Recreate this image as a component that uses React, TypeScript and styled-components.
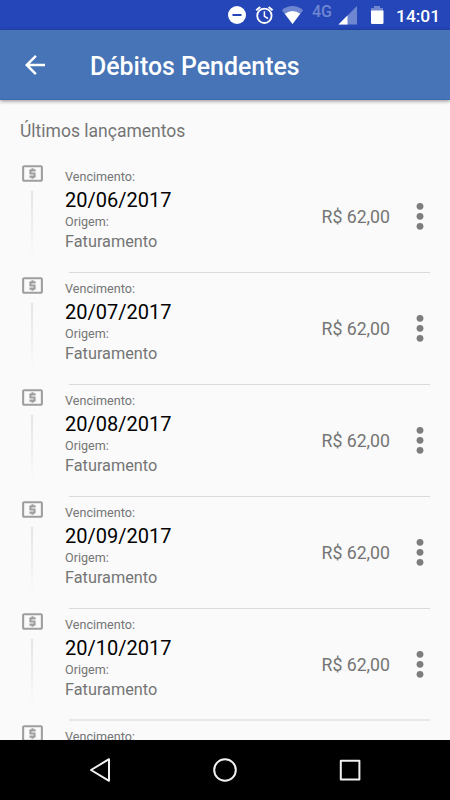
import React from "react";
import styled, { createGlobalStyle } from "styled-components";

const GlobalStyle = createGlobalStyle`
  * { box-sizing: border-box; }
  html, body { margin: 0; padding: 0; }
  body { font-family: Roboto, "Liberation Sans", sans-serif; background: #fafafa; overflow: hidden; }
`;

const Screen = styled.div`
  width: 450px;
  height: 800px;
  display: flex;
  flex-direction: column;
  overflow: hidden;
  background: #fafafa;
`;

const StatusBar = styled.header`
  flex: 0 0 30px;
  height: 30px;
  min-height: 0;
  background: #2446b8;
  color: #fff;
  display: flex;
  justify-content: flex-end;
  padding-right: 10px;
`;

const StatusIcons = styled.svg`
  width: 164px;
  height: 30px;
  margin-right: 12px;
  display: block;
`;

const NetworkLabel = styled.text`
  font: 500 16px Roboto, sans-serif;
  fill: #6f86d1;
`;

const Clock = styled.span`
  width: 44px;
  padding-top: 2px;
  font-size: 17.4px;
  font-weight: 500;
  line-height: 28px;
  white-space: nowrap;
`;

const AppBar = styled.div`
  flex: 0 0 70px;
  z-index: 1;
  display: flex;
  align-items: center;
  padding-left: 20px;
  background: #4674b7;
  border-bottom: 1px solid #3a6cb4;
  box-shadow: 0 1px 4px rgba(0, 0, 0, 0.45);
`;

const BackButton = styled.button`
  width: 30px;
  height: 30px;
  margin-right: 40px;
  padding: 0;
  border: 0;
  background: none;
  svg { display: block; }
`;

const Title = styled.h1`
  margin: 5px 0 0;
  font-size: 24.9px;
  font-weight: 500;
  line-height: 30px;
  color: #fff;
`;

const Content = styled.main`
  flex: 1 1 0;
  min-height: 0;
  overflow: hidden;
`;

const SectionTitle = styled.h2`
  height: 61px;
  margin: 0;
  padding-left: 20px;
  font-size: 17.5px;
  font-weight: 400;
  line-height: 62px;
  color: #757575;
`;

const Row = styled.article`
  height: 112px;
  display: flex;
  padding-right: 20px;
`;

const Timeline = styled.div`
  width: 65px;
  padding-left: 20px;
  svg { display: block; }
`;

const TimelineStem = styled.div`
  width: 2px;
  height: 66px;
  margin: 5px 0 0 11px;
  background: linear-gradient(#e4e4e4, #eeeeee 50%, #fafafa);
`;

const RowBody = styled.div<{ $soft: boolean }>`
  flex: 1;
  display: flex;
  background: linear-gradient(${p => (p.$soft ? "#e8e8e8, #e8e8e8" : "#dadada, #dadada")}) no-repeat
    4px ${p => (p.$soft ? "110px" : "111px")} / calc(100% - 4px) ${p => (p.$soft ? "2px" : "1px")};
`;

const Details = styled.div`
  flex: 1;
  padding-top: 8px;
`;

const Caption = styled.div`
  height: 16px;
  font-size: 12.6px;
  line-height: 16px;
  color: #757575;
`;

const DueDate = styled.div`
  height: 29px;
  font-size: 20px;
  line-height: 30px;
  color: #000;
`;

const Origin = styled.div`
  height: 23px;
  font-size: 16.3px;
  line-height: 23px;
  color: #757575;
`;

const Amount = styled.div`
  width: 70px;
  margin-right: 19px;
  font-size: 17.7px;
  line-height: 112px;
  color: #757575;
  white-space: nowrap;
  text-align: right;
`;

const MenuButton = styled.button`
  width: 21px;
  height: 112px;
  padding: 0;
  border: 0;
  background: none;
  svg { display: block; }
`;

const NavBar = styled.nav`
  flex: 0 0 60px;
  display: flex;
  align-items: center;
  justify-content: center;
  gap: 85px;
  background: #000;
`;

const NavIcon = styled.svg`
  width: 40px;
  height: 40px;
  fill: none;
  stroke: #f1f1f1;
  stroke-width: 2;
  stroke-linejoin: round;
`;

const dates = ["20/06/2017", "20/07/2017", "20/08/2017", "20/09/2017", "20/10/2017", "20/11/2017"];

const MoneyIcon = () => (
  <svg width="25" height="25" viewBox="0 0 24 24" fill="#9e9e9e">
    <path d="M11 17h2v-1h1c.55 0 1-.45 1-1v-3c0-.55-.45-1-1-1h-3v-1h4V8h-2V7h-2v1h-1c-.55 0-1 .45-1 1v3c0 .55.45 1 1 1h3v1H9v2h2v1zm9-13H4c-1.11 0-1.99.89-1.99 2L2 18c0 1.11.89 2 2 2h16c1.11 0 2-.89 2-2V6c0-1.11-.89-2-2-2zm0 14H4V6h16v12z" />
  </svg>
);

function DebtRow({ date, soft }: { date: string; soft: boolean }) {
  return (
    <Row>
      <Timeline>
        <MoneyIcon />
        <TimelineStem />
      </Timeline>
      <RowBody $soft={soft}>
        <Details>
          <Caption>Vencimento:</Caption>
          <DueDate>{date}</DueDate>
          <Caption>Origem:</Caption>
          <Origin>Faturamento</Origin>
        </Details>
        <Amount>R$ 62,00</Amount>
        <MenuButton aria-label="Opções">
          <svg width="21" height="112" fill="#7d7d7d">
            <circle cx="11" cy="45.3" r="3.4" />
            <circle cx="11" cy="55.3" r="3.4" />
            <circle cx="11" cy="65.3" r="3.4" />
          </svg>
        </MenuButton>
      </RowBody>
    </Row>
  );
}

export default function App() {
  return (
    <>
      <GlobalStyle />
      <Screen>
        <StatusBar>
          <StatusIcons viewBox="220 0 164 30">
            <circle cx="237" cy="15" r="9" fill="#fff" />
            <path d="M232.5 15h9" stroke="#2446b8" strokeWidth="2" />
            <g fill="none" stroke="#fff" strokeWidth="1.8">
              <circle cx="264.4" cy="15.8" r="7.2" />
              <path d="M264.4 11.3v5l3.6 2.2" strokeWidth="1.5" />
              <path d="M256.2 10.3l4-3.4M272.6 10.3l-4-3.4" strokeWidth="2" />
            </g>
            <path d="M281.8 10.2Q292.5 1.8 303.2 10.2L292.5 24Z" fill="#6f86d1" />
            <path d="M284.8 13.8Q292.5 8 300.2 13.8L292.5 24Z" fill="#fff" />
            <NetworkLabel x="312" y="16.5">4G</NetworkLabel>
            <path d="M338.5 24.5L357 6v18.5Z" fill="#6f86d1" />
            <path d="M338.5 24.5L347.5 15.5v9Z" fill="#fff" />
            <path d="M371 8h3V6h6v2h3v4h-12Z" fill="#6f86d1" />
            <path d="M371 10.5h12.5v12.3q0 1.2-1.2 1.2h-10.1q-1.2 0-1.2-1.2Z" fill="#fff" />
          </StatusIcons>
          <Clock>14:01</Clock>
        </StatusBar>
        <AppBar>
          <BackButton aria-label="Voltar">
            <svg width="30" height="30" viewBox="0 0 24 24" fill="#fff">
              <path d="M20 11H7.83l5.59-5.59L12 4l-8 8 8 8 1.41-1.41L7.83 13H20v-2z" />
            </svg>
          </BackButton>
          <Title>Débitos Pendentes</Title>
        </AppBar>
        <Content>
          <SectionTitle>Últimos lançamentos</SectionTitle>
          {dates.map((date, i) => (
            <DebtRow key={date} date={date} soft={i === 4} />
          ))}
        </Content>
        <NavBar>
          <NavIcon viewBox="0 0 40 40"><path d="M11 20L29 9.2v21.6Z" /></NavIcon>
          <NavIcon viewBox="0 0 40 40"><circle cx="20" cy="20" r="10.8" /></NavIcon>
          <NavIcon viewBox="0 0 40 40"><rect x="10.8" y="10.8" width="18.6" height="18.6" /></NavIcon>
        </NavBar>
      </Screen>
    </>
  );
}
